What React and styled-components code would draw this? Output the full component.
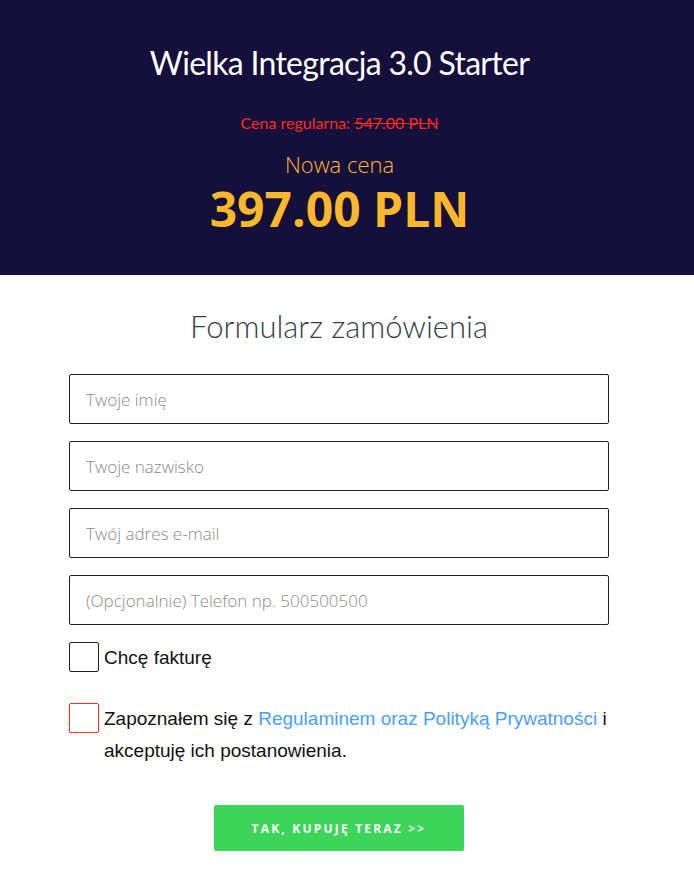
import React from 'react'
import styled, { createGlobalStyle } from 'styled-components'

const Global = createGlobalStyle`
  body {
    margin: 0;
    background: #fff;
    font-family: 'Open Sans', sans-serif;
  }
  * { box-sizing: border-box; }
`

const fields = [
  'Twoje imię',
  'Twoje nazwisko',
  'Twój adres e-mail',
  '(Opcjonalnie) Telefon np. 500500500',
]

const App = () => {
  return (
    <>
      <Global />
      <Header>
        <Title>Wielka Integracja 3.0 Starter</Title>
        <OldPrice>
          Cena regularna: <s>547.00 PLN</s>
        </OldPrice>
        <NewLabel>Nowa cena</NewLabel>
        <NewPrice>397.00 PLN</NewPrice>
      </Header>
      <Form>
        <FormTitle>Formularz zamówienia</FormTitle>
        <Fields>
          {fields.map(f => (
            <Input key={f} placeholder={f} />
          ))}
        </Fields>
        <CheckRow>
          <Box />
          <Label>Chcę fakturę</Label>
        </CheckRow>
        <CheckRow $terms>
          <Box $error />
          <Label>
            Zapoznałem się z <a href="#">Regulaminem oraz Polityką Prywatności</a> i
            akceptuję ich postanowienia.
          </Label>
        </CheckRow>
        <Submit type="button">Tak, kupuję teraz &gt;&gt;</Submit>
      </Form>
    </>
  )
}

export default App

const Header = styled.header`
  background: #140f3b;
  height: 275px;
  display: flex;
  flex-direction: column;
  align-items: center;
  padding: 40px 15px 0 0;
`
const Title = styled.h1`
  margin: 0;
  color: #fff;
  font-family: 'Lato', sans-serif;
  font-weight: 400;
  font-size: 32px;
  line-height: 46px;
  letter-spacing: -0.7px;
`
const OldPrice = styled.div`
  margin-top: 27px;
  color: #ff2b1c;
  font-family: 'Lato', sans-serif;
  font-size: 16px;
  line-height: 20px;
  s { text-decoration-thickness: 1px; }
`
const NewLabel = styled.div`
  margin-top: 17px;
  color: #fdb72a;
  font-family: 'Open Sans', sans-serif;
  font-weight: 300;
  font-size: 22px;
  line-height: 28px;
`
const NewPrice = styled.div`
  margin-top: 3px;
  color: #fdb72a;
  font-family: 'Open Sans', sans-serif;
  font-weight: 700;
  font-size: 48px;
  line-height: 56px;
`
const Form = styled.form`
  width: 540px;
  margin-left: 69px;
  padding-top: 28px;
  display: flex;
  flex-direction: column;
`
const FormTitle = styled.h2`
  margin: 0 0 25px;
  text-align: center;
  color: #333e48;
  font-family: 'Lato', sans-serif;
  font-weight: 300;
  font-size: 31px;
  line-height: 46px;
`
const Fields = styled.div`
  display: flex;
  flex-direction: column;
  gap: 17px;
`
const Input = styled.input`
  height: 50px;
  border: 1px solid #222;
  border-radius: 2px;
  padding: 0 16px;
  font-family: 'Open Sans', sans-serif;
  font-weight: 300;
  font-size: 17px;
  color: #333;
  &::placeholder { color: #8a8a8a; }
`
const CheckRow = styled.div`
  display: flex;
  align-items: flex-start;
  gap: 5px;
  margin-top: ${p => (p.$terms ? '29px' : '17px')};
`
const Box = styled.span`
  flex: none;
  width: 30px;
  height: 30px;
  border: 1px solid ${p => (p.$error ? '#ff2b1c' : '#222')};
  border-radius: 2px;
`
const Label = styled.div`
  font-family: 'Liberation Sans', Arial, sans-serif;
  font-size: 19px;
  color: #111;
  line-height: 32px;
  a {
    color: #4a9eff;
    text-decoration: none;
  }
`
const Submit = styled.button`
  align-self: center;
  margin-top: 38px;
  width: 250px;
  height: 46px;
  border: none;
  border-radius: 2px;
  background: #3dd45a;
  color: #fff;
  font-family: 'Open Sans', sans-serif;
  font-weight: 700;
  font-size: 12px;
  letter-spacing: 2.2px;
  text-transform: uppercase;
`
